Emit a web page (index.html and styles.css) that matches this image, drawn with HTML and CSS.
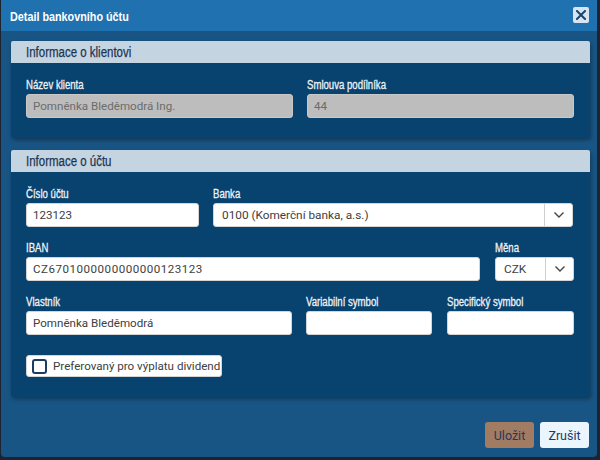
FILE: index.html
```html
<!DOCTYPE html>
<html lang="cs">
<head>
<meta charset="utf-8">
<title>Detail bankovního účtu</title>
<link rel="stylesheet" href="styles.css">
</head>
<body>
<div class="dialog">
  <div class="titlebar">
    <span class="title">Detail bankovního účtu</span>
    <button class="close" aria-label="Zavřít">
      <svg width="10" height="10" viewBox="0 0 10 10"><path d="M1 1L9 9M9 1L1 9" stroke="#17466f" stroke-width="2" stroke-linecap="square"/></svg>
    </button>
  </div>
  <div class="content">
    <section class="panel">
      <div class="panel-head"><span class="head-text">Informace o klientovi</span></div>
      <div class="panel-body">
        <div class="row row-half">
          <div class="field">
            <label><span class="lbl">Název klienta</span></label>
            <input class="inp disabled" value="Pomněnka Bleděmodrá Ing." disabled>
          </div>
          <div class="field">
            <label><span class="lbl">Smlouva podílníka</span></label>
            <input class="inp disabled" value="44" disabled>
          </div>
        </div>
      </div>
    </section>
    <section class="panel">
      <div class="panel-head"><span class="head-text">Informace o účtu</span></div>
      <div class="panel-body">
        <div class="row row-1">
          <div class="field">
            <label><span class="lbl">Číslo účtu</span></label>
            <input class="inp" value="123123">
          </div>
          <div class="field">
            <label><span class="lbl">Banka</span></label>
            <div class="select">
              <span class="sel-val">0100 (Komerční banka, a.s.)</span>
              <span class="sel-btn"><svg width="12" height="8" viewBox="0 0 12 8"><path d="M1.5 1.5L6 6L10.5 1.5" fill="none" stroke="#444" stroke-width="1.4"/></svg></span>
            </div>
          </div>
        </div>
        <div class="row row-2">
          <div class="field">
            <label><span class="lbl">IBAN</span></label>
            <input class="inp iban" value="CZ6701000000000000123123">
          </div>
          <div class="field">
            <label><span class="lbl">Měna</span></label>
            <div class="select">
              <span class="sel-val">CZK</span>
              <span class="sel-btn"><svg width="12" height="8" viewBox="0 0 12 8"><path d="M1.5 1.5L6 6L10.5 1.5" fill="none" stroke="#444" stroke-width="1.4"/></svg></span>
            </div>
          </div>
        </div>
        <div class="row row-3">
          <div class="field">
            <label><span class="lbl">Vlastník</span></label>
            <input class="inp" value="Pomněnka Bleděmodrá">
          </div>
          <div class="field">
            <label><span class="lbl">Variabilní symbol</span></label>
            <input class="inp" value="">
          </div>
          <div class="field">
            <label><span class="lbl">Specifický symbol</span></label>
            <input class="inp" value="">
          </div>
        </div>
        <label class="check">
          <span class="box"></span>
          <span>Preferovaný pro výplatu dividend</span>
        </label>
      </div>
    </section>
    <div class="actions">
      <button class="btn save">Uložit</button>
      <button class="btn cancel">Zrušit</button>
    </div>
  </div>
</div>
</body>
</html>
```

FILE: styles.css
```css
* { box-sizing: border-box; }
html, body { margin: 0; padding: 0; }
body {
  width: 600px;
  height: 460px;
  background: #1b2430;
  font-family: Roboto, "Liberation Sans", Arial, sans-serif;
  overflow: hidden;
}
.dialog {
  margin-left: 1px;
  width: 596px;
  height: 457px;
  background: #195584;
  border-radius: 0 0 4px 4px;
  display: flex;
  flex-direction: column;
}
.titlebar {
  height: 31px;
  background: #1f71af;
  display: flex;
  align-items: center;
  justify-content: space-between;
  padding: 0 8px 0 9px;
}
.title {
  display: inline-block;
  color: #ffffff;
  font-family: "Liberation Sans", Arial, sans-serif;
  font-weight: bold;
  font-size: 13.5px;
  margin-top: 1px;
  transform: scaleX(0.8);
  transform-origin: left center;
  white-space: nowrap;
}
.close {
  width: 16px;
  height: 16px;
  padding: 0;
  border: none;
  border-radius: 2px;
  background: #d8e5f1;
  display: flex;
  align-items: center;
  justify-content: center;
  margin-top: -1px;
}
.content {
  flex: 1;
  padding: 10px 7px 9px 10px;
  display: flex;
  flex-direction: column;
  gap: 12px;
}
.panel {
  background: #08426f;
  border-radius: 3px;
  box-shadow: 1px 2px 4px rgba(0, 0, 0, 0.35);
}
.panel-head {
  height: 22px;
  background: #c5d4e1;
  border-radius: 2px 2px 0 0;
  padding-left: 15px;
}
.head-text {
  display: inline-block;
  color: #1d3450;
  font-family: "Liberation Sans", Arial, sans-serif;
  font-size: 14px;
  line-height: 22px;
  transform: scaleX(0.82);
  transform-origin: left center;
  white-space: nowrap;
  -webkit-text-stroke: 0.25px #1d3450;
}
.panel-body {
  padding: 16px 16px 20px 15px;
  display: flex;
  flex-direction: column;
  gap: 15px;
}
.row { display: grid; }
.row-half { grid-template-columns: 1fr 1fr; column-gap: 14px; }
.row-1 { grid-template-columns: 173px 1fr; column-gap: 14px; padding-right: 1px; }
.row-2 { grid-template-columns: 1fr 79px; column-gap: 15px; }
.row-3 { grid-template-columns: 266px 125px 1fr; column-gap: 15px; }
.row-3 .field:nth-child(2) { margin-left: -1px; }
.field { display: flex; flex-direction: column; min-width: 0; }
.field label {
  height: 13px;
  line-height: 10px;
  margin-bottom: 2px;
  white-space: nowrap;
}
.lbl {
  display: inline-block;
  color: #eef3f8;
  font-family: "Liberation Sans", Arial, sans-serif;
  font-size: 12px;
  transform: scaleX(0.8);
  transform-origin: left center;
  -webkit-text-stroke: 0.3px #eef3f8;
}
.inp {
  height: 24px;
  width: 100%;
  border: 1px solid #d4d4d4;
  border-radius: 3px;
  background: #ffffff;
  color: #404040;
  font-family: Roboto, "Liberation Sans", Arial, sans-serif;
  font-size: 11.6px;
  padding: 0 6px;
  outline: none;
}
.inp.iban { letter-spacing: 0.5px; }
.inp.disabled {
  background: #bdbdbd;
  border-color: #c9c9c9;
  color: #6c6c6c;
}
.select {
  height: 24px;
  display: flex;
  background: #ffffff;
  border: 1px solid #d4d4d4;
  border-radius: 3px;
}
.sel-val {
  flex: 1;
  color: #404040;
  font-size: 11.8px;
  line-height: 22px;
  padding-left: 8px;
  white-space: nowrap;
  overflow: hidden;
}
.sel-btn {
  width: 28px;
  border-left: 1px solid #cfcfcf;
  display: flex;
  align-items: center;
  justify-content: center;
}
.check {
  margin-top: 5px;
  align-self: flex-start;
  height: 22px;
  width: 196px;
  background: #ffffff;
  border: 1px solid #d4d4d4;
  border-radius: 3px;
  display: flex;
  align-items: center;
  gap: 6px;
  padding-left: 5px;
  color: #404040;
  font-size: 11.6px;
  white-space: nowrap;
}
.box {
  flex: none;
  width: 15px;
  height: 15px;
  border: 2px solid #1b3d63;
  border-radius: 3px;
  background: #ffffff;
}
.actions {
  margin-top: auto;
  display: flex;
  justify-content: flex-end;
  gap: 6px;
  padding-right: 1px;
}
.btn {
  width: 49px;
  height: 26px;
  border: none;
  border-radius: 3px;
  font-family: Roboto, "Liberation Sans", Arial, sans-serif;
  font-size: 12.5px;
  padding: 0;
}
.save { background: #a17c63; color: #27385a; }
.cancel { background: #eaf5fd; color: #1f3864; }
```
